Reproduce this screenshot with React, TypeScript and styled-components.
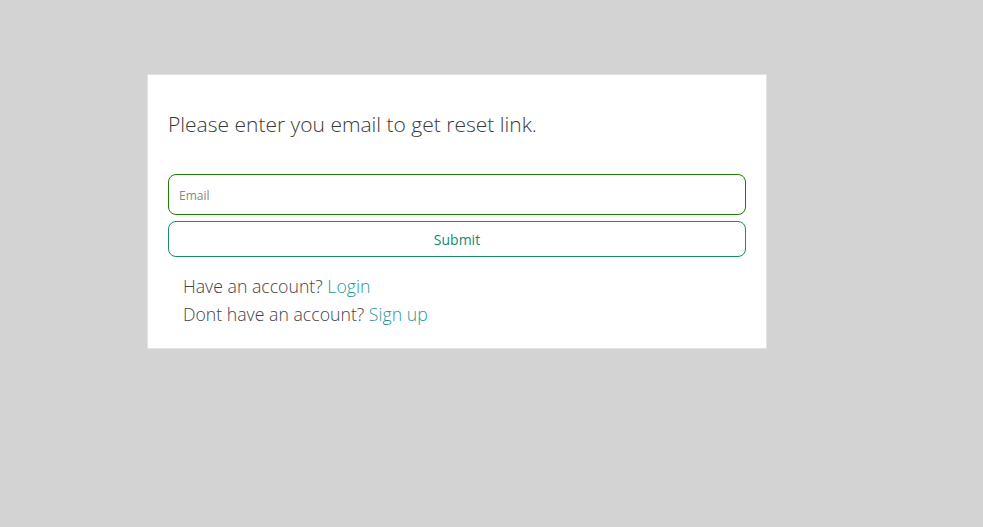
import React from "react";
import styled, { createGlobalStyle } from "styled-components";

const Global = createGlobalStyle`
  html, body { margin: 0; padding: 0; }
  body {
    background: #d3d3d3;
    font-family: "Open Sans", "Noto Sans", sans-serif;
    min-height: 527px;
  }
`;

const Page = styled.div`
  padding: 74px 0 0 147px;
`;

const Card = styled.div`
  width: 578px;
  background: #ffffff;
  border: 1px solid #e2e2e2;
  padding: 33px 20px 20px 20px;
`;

const Heading = styled.h2`
  margin: 0 0 32px 0;
  font-size: 21px;
  font-weight: 300;
  color: #3a3a3a;
  line-height: 1.6;
`;

const Form = styled.form`
  display: flex;
  flex-direction: column;
  gap: 6px;
`;

const Input = styled.input`
  box-sizing: border-box;
  width: 100%;
  height: 41px;
  border: 1px solid #1f7a08;
  border-radius: 8px;
  padding: 3px 10px 0 10px;
  font-family: inherit;
  font-size: 12px;
  color: #333;
  outline: none;
  &::placeholder { color: #888; }
`;

const Button = styled.button`
  box-sizing: border-box;
  width: 100%;
  height: 36px;
  border: 1px solid #168a6a;
  border-radius: 8px;
  background: #fff;
  color: #138a72;
  font-family: inherit;
  font-size: 14px;
  font-weight: 400;
  padding-top: 2px;
  cursor: pointer;
`;

const Links = styled.div`
  margin-top: 15px;
  padding-left: 15px;
  display: flex;
  flex-direction: column;
`;

const Line = styled.p`
  margin: 0;
  font-size: 17.7px;
  font-weight: 300;
  color: #444;
  line-height: 28px;
`;

const Link = styled.a`
  color: #1f9a92;
  text-decoration: none;
`;

export default function App() {
  return (
    <>
      <Global />
      <Page>
        <Card>
          <Heading>Please enter you email to get reset link.</Heading>
          <Form onSubmit={(e) => e.preventDefault()}>
            <Input type="email" placeholder="Email" />
            <Button type="submit">Submit</Button>
          </Form>
          <Links>
            <Line>
              Have an account? <Link href="#">Login</Link>
            </Line>
            <Line>
              Dont have an account? <Link href="#">Sign up</Link>
            </Line>
          </Links>
        </Card>
      </Page>
    </>
  );
}
